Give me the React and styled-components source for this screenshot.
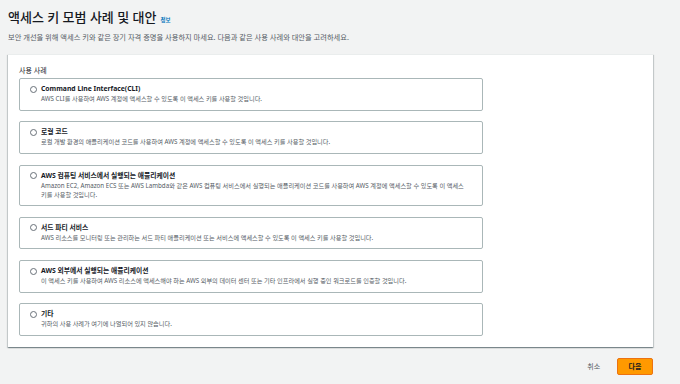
import styled, { createGlobalStyle } from "styled-components";

const GlobalStyle = createGlobalStyle`
  body {
    margin: 0;
    background: #f2f3f3;
    font-family: "Noto Sans", "Noto Sans CJK KR", sans-serif;
    color: #16191f;
  }
`;

const useCases = [
  {
    title: "Command Line Interface(CLI)",
    text: "AWS CLI를 사용하여 AWS 계정에 액세스할 수 있도록 이 액세스 키를 사용할 것입니다.",
  },
  {
    title: "로컬 코드",
    text: "로컬 개발 환경의 애플리케이션 코드를 사용하여 AWS 계정에 액세스할 수 있도록 이 액세스 키를 사용할 것입니다.",
  },
  {
    title: "AWS 컴퓨팅 서비스에서 실행되는 애플리케이션",
    text: "Amazon EC2, Amazon ECS 또는 AWS Lambda와 같은 AWS 컴퓨팅 서비스에서 실행되는 애플리케이션 코드를 사용하여 AWS 계정에 액세스할 수 있도록 이 액세스 키를 사용할 것입니다.",
  },
  {
    title: "서드 파티 서비스",
    text: "AWS 리소스를 모니터링 또는 관리하는 서드 파티 애플리케이션 또는 서비스에 액세스할 수 있도록 이 액세스 키를 사용할 것입니다.",
  },
  {
    title: "AWS 외부에서 실행되는 애플리케이션",
    text: "이 액세스 키를 사용하여 AWS 리소스에 액세스해야 하는 AWS 외부의 데이터 센터 또는 기타 인프라에서 실행 중인 워크로드를 인증할 것입니다.",
  },
  {
    title: "기타",
    text: "귀하의 사용 사례가 여기에 나열되어 있지 않습니다.",
  },
];

const App = () => {
  return (
    <>
      <GlobalStyle />
      <Page>
        <Title>
          액세스 키 모범 사례 및 대안
          <InfoLink>정보</InfoLink>
        </Title>
        <Intro>
          보안 개선을 위해 액세스 키와 같은 장기 자격 증명을 사용하지 마세요. 다음과 같은 사용 사례와 대안을 고려하세요.
        </Intro>
        <Panel>
          <GroupLabel>사용 사례</GroupLabel>
          <OptionList>
            {useCases.map((item) => (
              <Option key={item.title}>
                <Radio />
                <OptionTitle>{item.title}</OptionTitle>
                <OptionText>{item.text}</OptionText>
              </Option>
            ))}
          </OptionList>
        </Panel>
        <Footer>
          <CancelButton>취소</CancelButton>
          <PrimaryButton>다음</PrimaryButton>
        </Footer>
      </Page>
    </>
  );
};

export default App;

const Page = styled.div`
  padding: 9px 27px 0 8px;
`;

const Title = styled.h1`
  margin: 0;
  display: flex;
  align-items: baseline;
  font-size: 13px;
  line-height: 17px;
  font-weight: 500;
  color: #16191f;
`;

const InfoLink = styled.span`
  margin-left: 4px;
  font-size: 5.5px;
  font-weight: 700;
  color: #0073bb;
`;

const Intro = styled.p`
  margin: 3px 0 0;
  font-size: 7.25px;
  line-height: 10px;
  color: #545b64;
`;

const Panel = styled.section`
  margin-top: 12px;
  padding: 11px 10px 11px 11px;
  background: #fff;
  border-top: 1px solid #eaeded;
  box-shadow: 0 1px 1px 0 rgba(0, 28, 36, 0.3),
    1px 1px 1px 0 rgba(0, 28, 36, 0.15), -1px 1px 1px 0 rgba(0, 28, 36, 0.15);
`;

const GroupLabel = styled.div`
  font-size: 7px;
  line-height: 10px;
  color: #16191f;
  margin-bottom: 2px;
`;

const OptionList = styled.div`
  display: flex;
  flex-direction: column;
  gap: 10.8px;
  width: 464px;
`;

const Option = styled.label`
  display: grid;
  grid-template-columns: 7px 1fr;
  column-gap: 4px;
  padding: 5px 11px 6.5px 10px;
  border: 1px solid #aab7b8;
  border-radius: 2px;
  cursor: pointer;
`;

const Radio = styled.span`
  grid-row: 1;
  width: 7px;
  height: 7px;
  margin-top: 1.5px;
  box-sizing: border-box;
  border: 1px solid #687078;
  border-radius: 50%;
  background: #fff;
`;

const OptionTitle = styled.span`
  grid-column: 2;
  font-size: 6.8px;
  line-height: 10px;
  font-weight: 700;
  color: #16191f;
`;

const OptionText = styled.span`
  grid-column: 2;
  font-size: 6.2px;
  line-height: 9px;
  color: #545b64;
`;

const Footer = styled.div`
  display: flex;
  justify-content: flex-end;
  align-items: center;
  gap: 9px;
  margin-top: 11px;
`;

const CancelButton = styled.button`
  padding: 0 8px;
  border: none;
  background: none;
  font-family: inherit;
  font-size: 7px;
  line-height: 17px;
  color: #545b64;
  cursor: pointer;
`;

const PrimaryButton = styled.button`
  height: 17px;
  padding: 0 10.5px;
  border: 1px solid #ec7211;
  border-radius: 2px;
  background: #ff9900;
  font-family: inherit;
  font-size: 7px;
  font-weight: 700;
  color: #16191f;
  cursor: pointer;
`;
